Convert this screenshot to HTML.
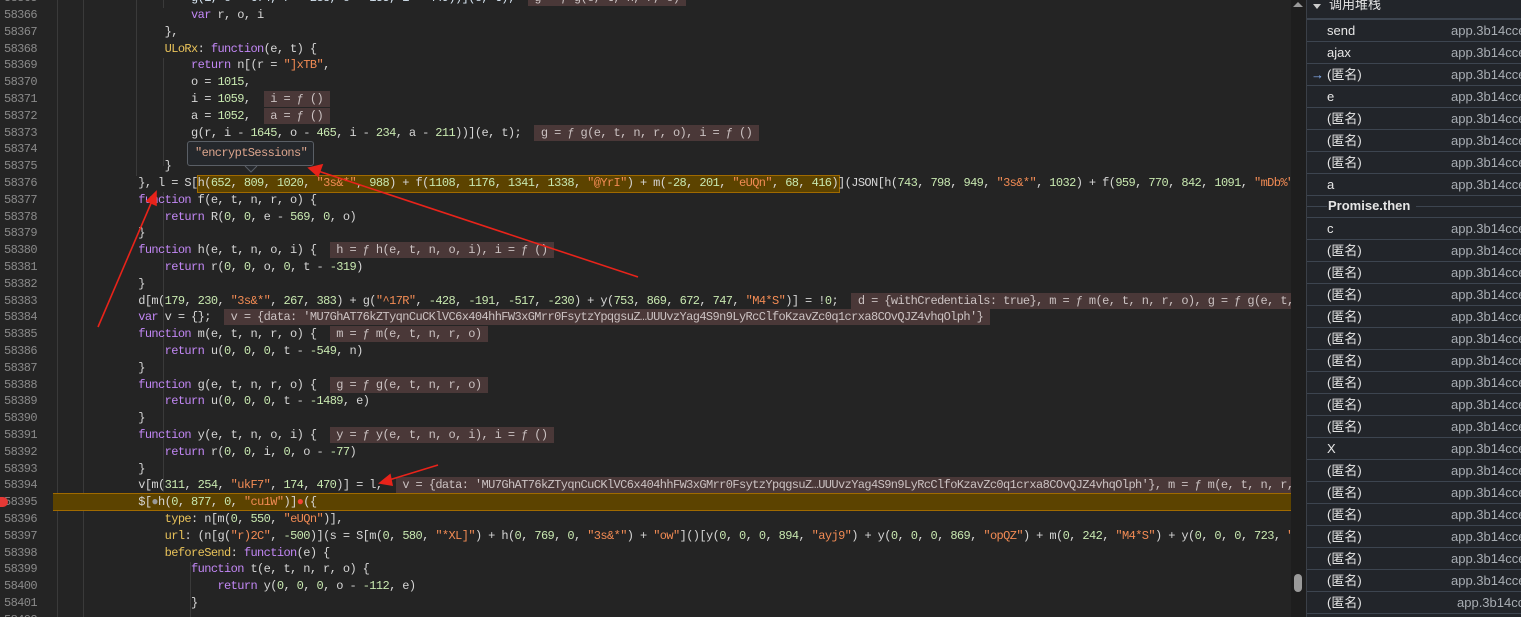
<!DOCTYPE html>
<html><head><meta charset="utf-8"><style>
*{margin:0;padding:0;box-sizing:border-box}
body{width:1521px;height:617px;overflow:hidden;background:#242424;position:relative;font-family:"Liberation Mono",monospace;font-size:12px;letter-spacing:-0.6px;color:#d6d6d6}
.ed{position:absolute;left:0;top:0;width:1291px;height:617px;background:#242424;overflow:hidden}
.ln{position:absolute;left:0;width:37px;text-align:right;color:#8a8a8a;height:16.8px;line-height:16.8px}
.cl{position:absolute;left:59px;white-space:pre;height:16.8px;line-height:16.8px}
.k{color:#c287f5}.n{color:#c8e8b0}.s{color:#f28b54}.p{color:#e8c25a}.i{color:#d6e4f0}
.pill{background:#4a3838;color:#cbc2c2;padding:1px 0}
.g{position:absolute;width:1px;background:#3a3a3a}
.pn{position:absolute;left:1306px;top:0;width:215px;height:617px;background:#22252a;border-left:1px solid #3b4048;font-family:"Liberation Sans","Noto Sans CJK SC",sans-serif;font-size:13px;letter-spacing:0;color:#e6e6e6}
.row{position:absolute;left:0;width:215px;height:22px;border-bottom:1px solid #3d4550;line-height:21px}
.row .a{position:absolute;left:20px}.row .b{position:absolute;left:144px;color:#a8adb3;white-space:nowrap}
</style></head><body>
<div class="ed">
<div class="g" style="left:57px;top:0;height:617px"></div>
<div class="g" style="left:83px;top:0;height:617px"></div>
<div class="g" style="left:136px;top:0;height:176px"></div>
<div class="g" style="left:163px;top:0;height:8px"></div>
<div class="g" style="left:163px;top:58px;height:108px"></div>
<div class="g" style="left:163px;top:192px;height:300px"></div>
<div class="g" style="left:190px;top:562px;height:55px"></div>
<div style="position:absolute;left:53px;top:493px;width:1238px;height:18px;background:#5c4300;border-top:1px solid #a06a00;border-bottom:1px solid #a06a00"></div>
<div style="position:absolute;left:197px;top:175px;width:643px;height:18px;background:#5c4300;border:1px solid #a06a00"></div>
<div id="c"></div>
</div>
<div style="position:absolute;left:1291px;top:0;width:15px;height:617px;background:#1e1e1e"></div>
<div style="position:absolute;left:1294px;top:574px;width:8px;height:18px;background:#9a9a9a;border-radius:4px"></div>
<div style="position:absolute;left:1293px;top:2px;width:0;height:0;border-left:5px solid transparent;border-right:5px solid transparent;border-bottom:5px solid #9a9a9a"></div>
<div style="position:absolute;left:0;top:497px;width:8px;height:10px;background:#e53935;border-radius:0 5px 5px 0"></div>
<div style="position:absolute;left:187px;top:141px;width:127px;height:25px;background:#25282c;border:1px solid #5a5f66;border-radius:3px;color:#dca58d;line-height:23px;padding-left:7px;font-size:12px;white-space:nowrap">"encryptSessions"</div>
<svg style="position:absolute;left:0;top:0" width="1300" height="617">
<path d="M245 166 L251 172 L257 166" fill="#25282c" stroke="#5a5f66"/>
<g stroke="#e8231a" stroke-width="1.6" fill="#e8231a">
<line x1="638" y1="277" x2="318" y2="171"/><path d="M309 168 L322 165 L318 176Z"/>
<line x1="98" y1="327" x2="152" y2="201"/><path d="M156 192 L156 205 L147 201Z"/>
<line x1="438" y1="465" x2="389" y2="480"/><path d="M380 483 L390 475 L392 485Z"/>
</g></svg>
<div class="pn">
<div style="position:absolute;left:0;top:0;width:215px;height:20px;border-bottom:2px solid #3d4550;line-height:14px"><span style="position:absolute;left:6px;top:4px;width:0;height:0;border-left:4px solid transparent;border-right:4px solid transparent;border-top:5px solid #ccc"></span><span style="position:absolute;left:22px;top:-2px;font-size:13px">调用堆栈</span></div>
<div id="r"></div>
</div>
<script>
var L=[
[58365,'                    <span class=i>g(i, o - 674, r - 238, o - 155, i - 449))](e, t);</span>  <span class=pill> g = ƒ g(e, t, n, r, o) </span>'],
[58366,'                    <span class=k>var</span> r, o, i'],
[58367,'                },'],
[58368,'                <span class=p>ULoRx</span>: <span class=k>function</span>(e, t) {'],
[58369,'                    <span class=k>return</span> n[(r = <span class=s>"]xTB"</span>,'],
[58370,'                    o = <span class=n>1015</span>,'],
[58371,'                    i = <span class=n>1059</span>,  <span class=pill> i = ƒ () </span>'],
[58372,'                    a = <span class=n>1052</span>,  <span class=pill> a = ƒ () </span>'],
[58373,'                    g(r, i - <span class=n>1645</span>, o - <span class=n>465</span>, i - <span class=n>234</span>, a - <span class=n>211</span>))](e, t);  <span class=pill> g = ƒ g(e, t, n, r, o), i = ƒ () </span>'],
[58374,''],
[58375,'                }'],
[58376,'            }, l = S[h(<span class=n>652</span>, <span class=n>809</span>, <span class=n>1020</span>, <span class=s>"3s&amp;*"</span>, <span class=n>988</span>) + f(<span class=n>1108</span>, <span class=n>1176</span>, <span class=n>1341</span>, <span class=n>1338</span>, <span class=s>"@YrI"</span>) + m(<span class=n>-28</span>, <span class=n>201</span>, <span class=s>"eUQn"</span>, <span class=n>68</span>, <span class=n>416</span>)](JSON[h(<span class=n>743</span>, <span class=n>798</span>, <span class=n>949</span>, <span class=s>"3s&amp;*"</span>, <span class=n>1032</span>) + f(<span class=n>959</span>, <span class=n>770</span>, <span class=n>842</span>, <span class=n>1091</span>, <span class=s>"mDb%"</span>'],
[58377,'            <span class=k>function</span> f(e, t, n, r, o) {'],
[58378,'                <span class=k>return</span> R(<span class=n>0</span>, <span class=n>0</span>, e - <span class=n>569</span>, <span class=n>0</span>, o)'],
[58379,'            }'],
[58380,'            <span class=k>function</span> h(e, t, n, o, i) {  <span class=pill> h = ƒ h(e, t, n, o, i), i = ƒ () </span>'],
[58381,'                <span class=k>return</span> r(<span class=n>0</span>, <span class=n>0</span>, o, <span class=n>0</span>, t - <span class=n>-319</span>)'],
[58382,'            }'],
[58383,'            d[m(<span class=n>179</span>, <span class=n>230</span>, <span class=s>"3s&amp;*"</span>, <span class=n>267</span>, <span class=n>383</span>) + g(<span class=s>"^17R"</span>, <span class=n>-428</span>, <span class=n>-191</span>, <span class=n>-517</span>, <span class=n>-230</span>) + y(<span class=n>753</span>, <span class=n>869</span>, <span class=n>672</span>, <span class=n>747</span>, <span class=s>"M4*S"</span>)] = !<span class=n>0</span>;  <span class=pill> d = {withCredentials: true}, m = ƒ m(e, t, n, r, o), g = ƒ g(e, t, </span>'],
[58384,'            <span class=k>var</span> v = {};  <span class=pill> v = {data: \'MU7GhAT76kZTyqnCuCKlVC6x404hhFW3xGMrr0FsytzYpqgsuZ…UUUvzYag4S9n9LyRcClfoKzavZc0q1crxa8COvQJZ4vhqOlph\'} </span>'],
[58385,'            <span class=k>function</span> m(e, t, n, r, o) {  <span class=pill> m = ƒ m(e, t, n, r, o) </span>'],
[58386,'                <span class=k>return</span> u(<span class=n>0</span>, <span class=n>0</span>, <span class=n>0</span>, t - <span class=n>-549</span>, n)'],
[58387,'            }'],
[58388,'            <span class=k>function</span> g(e, t, n, r, o) {  <span class=pill> g = ƒ g(e, t, n, r, o) </span>'],
[58389,'                <span class=k>return</span> u(<span class=n>0</span>, <span class=n>0</span>, <span class=n>0</span>, t - <span class=n>-1489</span>, e)'],
[58390,'            }'],
[58391,'            <span class=k>function</span> y(e, t, n, o, i) {  <span class=pill> y = ƒ y(e, t, n, o, i), i = ƒ () </span>'],
[58392,'                <span class=k>return</span> r(<span class=n>0</span>, <span class=n>0</span>, i, <span class=n>0</span>, o - <span class=n>-77</span>)'],
[58393,'            }'],
[58394,'            v[m(<span class=n>311</span>, <span class=n>254</span>, <span class=s>"ukF7"</span>, <span class=n>174</span>, <span class=n>470</span>)] = l,  <span class=pill> v = {data: \'MU7GhAT76kZTyqnCuCKlVC6x404hhFW3xGMrr0FsytzYpqgsuZ…UUUvzYag4S9n9LyRcClfoKzavZc0q1crxa8COvQJZ4vhqOlph\'}, m = ƒ m(e, t, n, r, </span>'],
[58395,'            $[<span style="color:#999">●</span>h(<span class=n>0</span>, <span class=n>877</span>, <span class=n>0</span>, <span class=s>"cu1W"</span>)]<span style="color:#f44336">●</span>({'],
[58396,'                <span class=p>type</span>: n[m(<span class=n>0</span>, <span class=n>550</span>, <span class=s>"eUQn"</span>)],'],
[58397,'                <span class=p>url</span>: (n[g(<span class=s>"r)2C"</span>, <span class=n>-500</span>)](s = S[m(<span class=n>0</span>, <span class=n>580</span>, <span class=s>"*XL]"</span>) + h(<span class=n>0</span>, <span class=n>769</span>, <span class=n>0</span>, <span class=s>"3s&amp;*"</span>) + <span class=s>"ow"</span>]()[y(<span class=n>0</span>, <span class=n>0</span>, <span class=n>0</span>, <span class=n>894</span>, <span class=s>"ayj9"</span>) + y(<span class=n>0</span>, <span class=n>0</span>, <span class=n>0</span>, <span class=n>869</span>, <span class=s>"opQZ"</span>) + m(<span class=n>0</span>, <span class=n>242</span>, <span class=s>"M4*S"</span>) + y(<span class=n>0</span>, <span class=n>0</span>, <span class=n>0</span>, <span class=n>723</span>, <span class=s>"'],
[58398,'                <span class=p>beforeSend</span>: <span class=k>function</span>(e) {'],
[58399,'                    <span class=k>function</span> t(e, t, n, r, o) {'],
[58400,'                        <span class=k>return</span> y(<span class=n>0</span>, <span class=n>0</span>, <span class=n>0</span>, o - <span class=n>-112</span>, e)'],
[58401,'                    }'],
[58402,'                    ']
];
var h='';
L.forEach(function(a,i){var t=(i*16.8-9.8).toFixed(1);h+='<div class=ln style="top:'+t+'px">'+a[0]+'</div><div class=cl style="top:'+t+'px">'+a[1]+'</div>';});
document.getElementById('c').innerHTML=h;
var R=['send','ajax','(匿名)','e','(匿名)','(匿名)','(匿名)','a','P','c','(匿名)','(匿名)','(匿名)','(匿名)','(匿名)','(匿名)','(匿名)','(匿名)','(匿名)','X','(匿名)','(匿名)','(匿名)','(匿名)','(匿名)','(匿名)','(匿名)'];
var o='';
R.forEach(function(n,i){var t=20+i*22;
if(n=='P'){o+='<div style="position:absolute;top:'+t+'px;left:0;width:215px;height:22px;border-bottom:1px solid #3d4550"><div style="position:absolute;left:0;right:0;top:10px;height:1px;background:#3d4550"></div><span style="position:absolute;left:20px;top:2px;background:#22252a;padding:0 6px 0 1px;font-weight:bold">Promise.then</span></div>';return;}
o+='<div class=row style="top:'+t+'px">'+(i==2?'<span style="position:absolute;left:4px;color:#8ab4f8">→</span>':'')+'<span class=a>'+n+'</span><span class=b style="'+(i==26?'left:150px':'')+'">app.3b14cce1</span></div>';});
document.getElementById('r').innerHTML=o;
</script>
</body></html>
